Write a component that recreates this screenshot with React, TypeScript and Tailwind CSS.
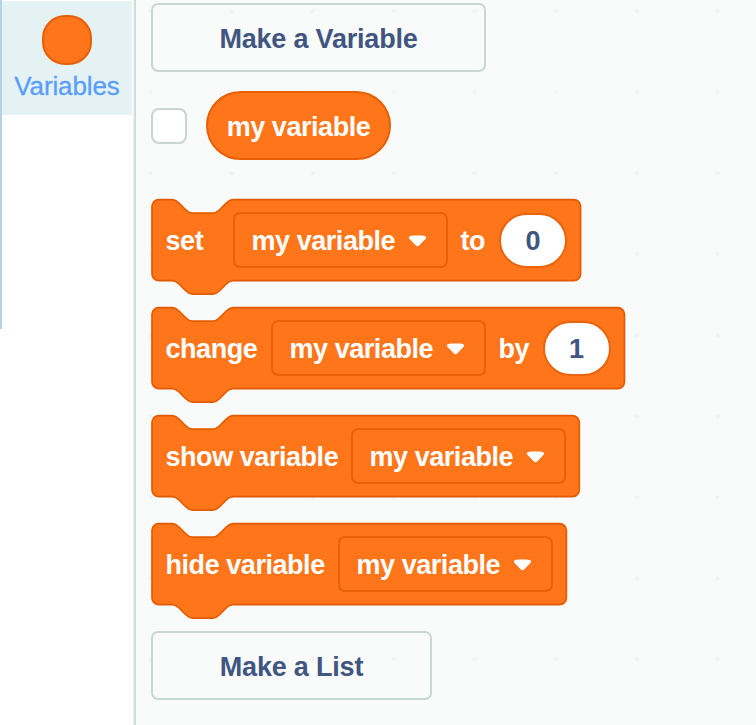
import type { ReactNode } from "react";

const NOTCH_RIGHT = "c 2,0 3,1 4,2 l 4,4 c 1,1 2,2 4,2 h 12 c 2,0 3,-1 4,-2 l 4,-4 c 1,-1 2,-2 4,-2";
const NOTCH_LEFT = "c -2,0 -3,1 -4,2 l -4,4 c -1,1 -2,2 -4,2 h -12 c -2,0 -3,-1 -4,-2 l -4,-4 c -1,-1 -2,-2 -4,-2";
const UNIT = 1.6875;

const TEXT = "block whitespace-nowrap text-[27px] font-bold leading-[32px]";

function Block({ width, children }: { width: number; children: ReactNode }) {
  const w = width / UNIT;
  const d = `M 0,4 A 4,4 0 0 1 4,0 H 12 ${NOTCH_RIGHT} H ${w - 4} a 4,4 0 0 1 4,4 v 40 a 4,4 0 0 1 -4,4 H 48 ${NOTCH_LEFT} H 4 a 4,4 0 0 1 -4,-4 z`;
  return (
    <div className="relative mb-[27px] flex h-[81px] items-center pl-[13.5px] text-white" style={{ width }}>
      <svg className="absolute inset-0 h-full w-full overflow-visible">
        <path d={d} transform={`translate(0 -0.4) scale(${UNIT})`} fill="#ff751a" stroke="#e25b00" strokeWidth="1" />
      </svg>
      {children}
    </div>
  );
}

function Label({ width, children }: { width: number; children: string }) {
  return (
    <span className={`relative mt-0.5 ${TEXT} tracking-[-0.45px]`} style={{ width }}>
      {children}
    </span>
  );
}

function Dropdown() {
  return (
    <div className="relative flex h-[56px] w-[215px] shrink-0 items-center rounded-[7px] border-2 border-[#ea6003] pl-[17px]">
      <span className={`${TEXT} mt-0.5 w-[156px] tracking-[-0.45px]`}>my variable</span>
      <svg className="mt-[2px] h-3 w-[19px]" viewBox="0 0 19 12">
        <path d="M2.4 0.9C5 0.5 14 0.5 16.6 0.9C18.4 1.2 18.6 2.8 17.4 4L11.4 10.2C10.1 11.6 8.9 11.6 7.6 10.2L1.6 4C0.4 2.8 0.6 1.2 2.4 0.9Z" fill="#fff" />
      </svg>
    </div>
  );
}

function NumberInput({ value }: { value: string }) {
  return (
    <div className="relative flex h-[55px] w-[68px] shrink-0 items-center justify-center rounded-[28px] border-2 border-[#e8640d] bg-white text-[#405580]">
      <span className={`${TEXT} mt-0.5`}>{value}</span>
    </div>
  );
}

function PaletteButton({ width, children }: { width: number; children: string }) {
  return (
    <button
      className="-ml-px flex h-[69px] items-center justify-center rounded-[7px] border-2 border-[#c8d6d2] pt-0.5 text-[#405580]"
      style={{ width }}
    >
      <span className={`${TEXT} tracking-[-0.2px]`}>{children}</span>
    </button>
  );
}

export default function App() {
  return (
    <div className="flex h-[725px] w-[756px] overflow-hidden bg-white font-['Liberation_Sans',sans-serif]">
      <div className="h-[329px] w-[2px] bg-[#b4d3e4]" />
      <aside className="w-[131px] bg-white">
        <div className="mt-px flex h-[114px] w-[130px] flex-col items-center bg-[#e4f2f3] pt-[14px]">
          <div className="size-[50px] rounded-[23px] border-2 border-[#e65f06] bg-[#ff751a]" />
          <span className="mt-[5px] text-[26px] leading-[32px] tracking-[-0.1px] text-[#5a9cff] [-webkit-text-stroke:0.3px_currentColor]">Variables</span>
        </div>
      </aside>
      <div className="w-[3px] border-l border-[#edf3f1] bg-[#d0deda]" />
      <main className="flex-1 bg-[#f9fbfb] bg-[radial-gradient(circle,#f1f3f3_1.5px,transparent_2.5px)] bg-[length:81px_81px] bg-[position:-25.8px_-29.2px] pl-4 pt-[3px]">
        <PaletteButton width={335}>Make a Variable</PaletteButton>
        <div className="-ml-px mt-[19px] flex h-[69px] items-center">
          <div className="size-[36px] rounded-[8px] border-2 border-[#c8d6d2] bg-white" />
          <div className="ml-[19px] flex h-[69px] w-[185px] items-center justify-center rounded-[35px] border-2 border-[#e65f06] bg-[#ff751a] pt-[3px] text-white">
            <span className={`${TEXT} tracking-[-0.45px]`}>my variable</span>
          </div>
        </div>
        <div className="mt-[39.6px]">
          <Block width={428.6}>
            <Label width={67}>set</Label>
            <Dropdown />
            <span className="w-[13px]" />
            <Label width={38.5}>to</Label>
            <NumberInput value="0" />
          </Block>
          <Block width={472.5}>
            <Label width={105}>change</Label>
            <Dropdown />
            <span className="w-[13px]" />
            <Label width={44}>by</Label>
            <NumberInput value="1" />
          </Block>
          <Block width={427.3}>
            <Label width={185}>show variable</Label>
            <Dropdown />
          </Block>
          <Block width={414.4}>
            <Label width={172}>hide variable</Label>
            <Dropdown />
          </Block>
        </div>
        <div className="-mt-[0.6px]">
          <PaletteButton width={281}>Make a List</PaletteButton>
        </div>
      </main>
    </div>
  );
}
